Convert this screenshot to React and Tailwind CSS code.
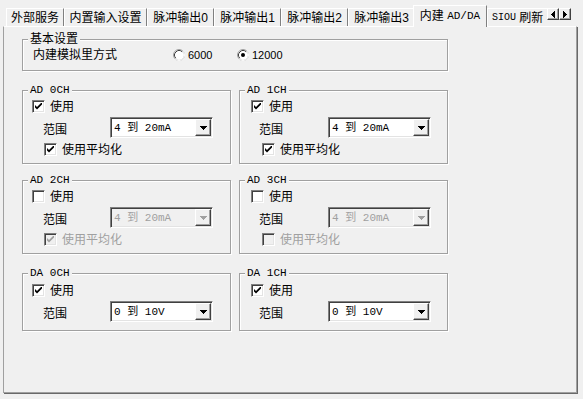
import React from 'react';

const cjk = "font-['Liberation_Sans','Noto_Sans_CJK_SC',sans-serif]";
const mono = "font-['Liberation_Mono','Noto_Sans_CJK_SC',monospace]";

const tabs = [
    { label: '外部服务', w: 'w-[58px]' },
    { label: '内置输入设置', w: 'w-[83px]' },
    { label: '脉冲输出0', w: 'w-[67px]' },
    { label: '脉冲输出1', w: 'w-[67px]' },
    { label: '脉冲输出2', w: 'w-[67px]' },
    { label: '脉冲输出3', w: 'w-[67px]' },
];

function Tab({ label, w }) {
    return (
        <div className={`mb-[1px] flex h-[18px] shrink-0 items-center justify-center border-t border-r border-l border-t-white border-r-[#808080] border-l-white ${w}`}>
            {label}
        </div>
    );
}

function ScrollBtn({ left }) {
    return (
        <span className="flex h-[12px] w-[12px] items-center justify-center border border-t-white border-l-white border-r-[#404040] border-b-[#404040] bg-[#f0f0f0] shadow-[inset_-1px_-1px_0_#a0a0a0]">
            <svg width="4" height="7" viewBox="0 0 4 7" shapeRendering="crispEdges">
                {left ? <path d="M4 0v7L0 3.5z" fill="#000" /> : <path d="M0 0v7l4-3.5z" fill="#000" />}
            </svg>
        </span>
    );
}

function CheckBox({ checked, disabled }) {
    return (
        <span className={`flex h-[13px] w-[13px] shrink-0 items-center justify-center border border-t-[#808080] border-l-[#808080] border-r-white border-b-white shadow-[inset_1px_1px_0_#404040,inset_-1px_-1px_0_#e3e3e3] ${disabled ? 'bg-[#f0f0f0]' : 'bg-white'}`}>
            {checked && (
                <svg width="7" height="7" viewBox="0 0 7 7">
                    <path d="M0 2L2 4L7 -1V1.5L2 6.5L0 4.5Z" fill={disabled ? '#a0a0a0' : '#000'} />
                </svg>
            )}
        </span>
    );
}

function CheckRow({ checked, disabled, label, className }) {
    return (
        <div className={`flex h-[13px] items-center gap-[5px] ${className}`}>
            <CheckBox checked={checked} disabled={disabled} />
            <span className={disabled ? 'text-[#a0a0a0]' : ''}>{label}</span>
        </div>
    );
}

function Radio({ selected, label, className }) {
    return (
        <div className={`flex items-center gap-[3px] ${className}`}>
            <svg width="12" height="12" viewBox="0 0 12 12">
                <circle cx="6" cy="6" r="5.5" fill="#fff" stroke="#a0a0a0" />
                <path d="M2.11 9.89A5.5 5.5 0 0 0 9.89 2.11" fill="none" stroke="#fff" />
                <path d="M2.82 9.18A4.5 4.5 0 0 1 9.18 2.82" fill="none" stroke="#404040" />
                {selected && <circle cx="6" cy="6" r="2" fill="#000" />}
            </svg>
            <span className="text-[11px]">{label}</span>
        </div>
    );
}

function Combo({ value, disabled }) {
    return (
        <div className={`flex h-[21px] w-[103px] shrink-0 items-center border border-t-[#808080] border-l-[#808080] border-r-white border-b-white shadow-[inset_1px_1px_0_#404040,inset_-1px_-1px_0_#e3e3e3] ${disabled ? 'bg-[#f0f0f0] text-[#a0a0a0]' : 'bg-white'}`}>
            <span className={`flex-1 pl-[3px] text-[11px] leading-[12px] ${mono}`}>{value}</span>
            <span className="mr-[1px] flex h-[17px] w-[16px] items-center justify-center border border-t-white border-l-white border-r-[#404040] border-b-[#404040] bg-[#f0f0f0] shadow-[inset_-1px_-1px_0_#a0a0a0]">
                <svg width="7" height="4" viewBox="0 0 7 4" shapeRendering="crispEdges">
                    <path d="M0 0h7L3.5 4z" fill={disabled ? '#a0a0a0' : '#000'} />
                </svg>
            </span>
        </div>
    );
}

function Group({ title, titleMono, className, children }) {
    return (
        <div className={`relative border border-[#a0a0a0] shadow-[inset_1px_1px_0_#fff,1px_1px_0_#fff] ${className}`}>
            <span className={`absolute -top-[7px] left-[5px] bg-[#f0f0f0] px-[2px] leading-[12px] ${titleMono ? `text-[11px] ${mono}` : ''}`}>
                {title}
            </span>
            {children}
        </div>
    );
}

function Channel({ title, enabled, avg, range, right, disabled, da }) {
    return (
        <Group title={title} titleMono className={da ? 'h-[58px] w-[209px]' : 'h-[74px] w-[209px]'}>
            <CheckRow
                checked={enabled}
                label="使用"
                className={`${da ? 'mt-[10px]' : 'mt-[9px]'} ${right ? 'ml-[11px]' : 'ml-[9px]'}`}
            />
            <div className="mt-[4px] flex">
                <span className={`mt-[7px] shrink-0 ${right ? 'ml-[19px] w-[69px]' : 'ml-[20px] w-[67px]'}`}>范围</span>
                <Combo value={range} disabled={disabled} />
            </div>
            {!da && (
                <CheckRow
                    checked={avg}
                    disabled={disabled}
                    label="使用平均化"
                    className={`mt-[5px] ${right ? 'ml-[22px]' : 'ml-[21px]'}`}
                />
            )}
        </Group>
    );
}

export default function App() {
    return (
        <div className={`h-[399px] w-[583px] overflow-hidden bg-[#f0f0f0] text-[12px] leading-[12px] text-black ${cjk}`}>
            {/* tab strip */}
            <div className="flex h-[27px]">
                <div className="flex h-[27px] w-[547px] items-end overflow-hidden pl-[6px]">
                    {tabs.map((t) => (
                        <Tab key={t.label} label={t.label} w={t.w} />
                    ))}
                    <div className="relative z-10 -ml-[2px] flex h-[22px] w-[74px] shrink-0 items-center justify-center border-t border-r border-l border-t-white border-r-[#808080] border-l-white bg-[#f0f0f0] pb-[2px]">
                        内建&nbsp;<span className={`text-[11px] ${mono}`}>AD/DA</span>
                    </div>
                    <div className="mb-[1px] flex h-[18px] w-[70px] shrink-0 items-center border-t border-l border-t-white border-l-white pl-[4px]">
                        <span className={`text-[10px] ${mono}`}>SIOU</span>&nbsp;刷新
                    </div>
                </div>
                <div className="mt-[8px] flex">
                    <ScrollBtn left />
                    <ScrollBtn />
                </div>
            </div>

            {/* page */}
            <div className="-mt-[1px] ml-[3px] h-[367px] w-[574px] border-t border-l border-r border-b border-t-white border-l-[#a0a0a0] border-r-[#a0a0a0] border-b-[#a0a0a0] pl-[18px] pt-[12px] shadow-[1px_1px_0_#696969]">
                <Group title="基本设置" className="h-[32px] w-[426px]">
                    <div className="mt-[7px] flex h-[16px] items-center pl-[10px]">
                        <span className="w-[140px]">内建模拟里方式</span>
                        <Radio label="6000" className="w-[64px]" />
                        <Radio selected label="12000" />
                    </div>
                </Group>

                <div className="mt-[19px] flex gap-[8px]">
                    <Channel title="AD 0CH" enabled avg range="4 到 20mA" />
                    <Channel title="AD 1CH" enabled avg range="4 到 20mA" right />
                </div>

                <div className="mt-[16px] flex gap-[8px]">
                    <Channel title="AD 2CH" avg disabled range="4 到 20mA" />
                    <Channel title="AD 3CH" disabled range="4 到 20mA" right />
                </div>

                <div className="mt-[19px] flex gap-[8px]">
                    <Channel title="DA 0CH" enabled range="0 到 10V" da />
                    <Channel title="DA 1CH" enabled range="0 到 10V" right da />
                </div>
            </div>
        </div>
    );
}
